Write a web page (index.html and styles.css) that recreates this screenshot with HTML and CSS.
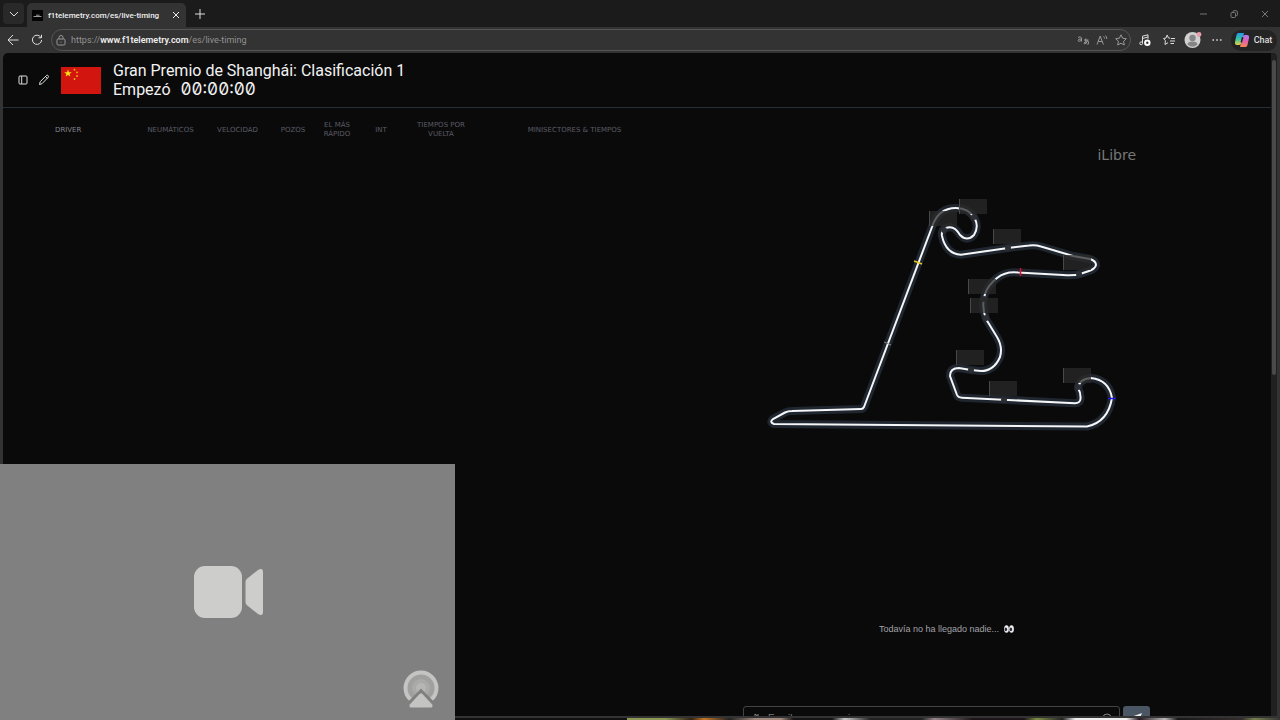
FILE: index.html
```html
<!DOCTYPE html>
<html lang="es">
<head>
  <meta charset="UTF-8" />
  <meta name="viewport" content="width=device-width, initial-scale=1.0"/>
  <title>f1telemetry.com/es/live-timing</title>
  <link rel="stylesheet" href="styles.css">
</head>
<body>

  <div class="browser">
    <div class="tab-strip">
      <button class="tab-menu" aria-label="Tabs"><svg width="10" height="10" viewBox="0 0 10 10"><path d="M1 3l4 4 4-4"/></svg></button>
      <div class="tab">
        <svg class="favicon" width="11" height="11" viewBox="0 0 11 11"><rect width="11" height="11" fill="#050505" stroke="none"/><path d="M1.500 6.500h8M4 5.200h3.500" stroke="#999"/></svg>
        <span>f1telemetry.com/es/live-timing</span>
        <button aria-label="Close tab"><svg width="8" height="8" viewBox="0 0 8 8"><path d="M1 1l6 6M7 1L1 7"/></svg></button>
      </div>
      <button class="new-tab" aria-label="New tab"><svg width="10" height="10" viewBox="0 0 10 10"><path d="M5 0v10M0 5h10"/></svg></button>
      <div class="window-buttons">
        <button aria-label="Minimize"><svg width="8" height="8" viewBox="0 0 8 8"><path d="M1 4h7"/></svg></button>
        <button aria-label="Restore"><svg width="8" height="8" viewBox="0 0 8 8"><rect x="1" y="2.500" width="4.500" height="5" rx="1"/><path d="M3 2.500V1.500q0-.8.8-.8h2.400q1.200 0 1.200 1.200v3q0 .8-.8.800h-1"/></svg></button>
        <button aria-label="Close"><svg width="8" height="8" viewBox="0 0 8 8"><path d="M1 1l6 6M7 1L1 7"/></svg></button>
      </div>
    </div>

    <div class="toolbar">
      <button aria-label="Back"><svg width="12" height="12" viewBox="0 0 12 12"><path d="M11.500 6H1M6 1L1 6l5 5"/></svg></button>
      <button aria-label="Reload"><svg width="12" height="12" viewBox="0 0 12 12"><path d="M9.800 3.200A4.600 4.600 0 1 0 10.600 6M10.500 .8v3h-3"/></svg></button>
      <div class="address">
        <svg width="10" height="11" viewBox="0 0 10 11"><rect x="1" y="4" width="8" height="6" rx="1.200"/><path d="M3 4V2.500a2 2 0 0 1 4 0V4M5 6.500v1"/></svg>
        <span class="url">https://<b>www.f1telemetry.com</b>/es/live-timing</span>
        <svg width="12" height="10" viewBox="0 0 12 10"><path d="M1 2.500q2.500-1.500 3.500.3V6.500M4.500 4Q1 3.800 1 5.500T4.500 5.500M7 5h4.500M8.800 3.500q-.4 3 .4 5M10.500 6Q9 9 7.400 8.800T8.500 6.500t3 .7-1.200 2"/></svg>
        <svg width="12" height="10" viewBox="0 0 12 10"><path d="M1 9.500L4.200 1l3.200 8.500M2.200 6.500h4M7.500 1.500q1 .8 1 2M9.300 .5q1.500 1.300 1.500 3.500"/></svg>
        <svg class="star" width="12" height="12" viewBox="0 0 12 12"><path d="M6 .8l1.600 3.400 3.700.5-2.700 2.600.7 3.700L6 9.200 2.700 11l.7-3.700L.7 4.700l3.700-.5z"/></svg>
      </div>
      <button aria-label="Media"><svg width="12" height="12" viewBox="0 0 12 12"><path d="M3.500 9V2.200L9 .8v4M3.500 4.500L9 3"/><circle cx="2.200" cy="9.300" r="1.400"/><circle cx="8.300" cy="8.700" r="2.200" stroke="#fff" stroke-width="2"/></svg></button>
      <button aria-label="Favorites"><svg width="12" height="12" viewBox="0 0 12 12"><path d="M7.200 4.200L5.400 3.900 4.200 1 3 4 .6 4.500 2.400 6.700 2 10.500l3-1.800M8 4.500h4M7 7h5M7.500 9.500H11"/></svg></button>
      <button class="profile" aria-label="Profile"><svg width="18" height="18" viewBox="0 0 18 18"><circle cx="8.500" cy="9" r="8" fill="#d0d0d0" stroke="none"/><circle cx="8.500" cy="7" r="3.200" fill="#858585" stroke="none"/><path d="M3.500 13.500q0-3 5-3t5 3q-5 4.500-10 0z" fill="#858585" stroke="none"/><circle cx="15" cy="3.500" r="2.400" fill="#e8a0ac" stroke="none"/></svg></button>
      <button aria-label="More"><svg width="10" height="4" viewBox="0 0 10 4"><path d="M.5 2h1.500M4.300 2h1.500M8 2h1.500" stroke-width="1.500"/></svg></button>
      <button class="chat-button">
        <svg width="16" height="16" viewBox="0 0 16 16">
          <defs>
            <linearGradient id="cool" x2="0" y2="1"><stop stop-color="#2498ee"/><stop offset=".5" stop-color="#36c1a2"/><stop offset="1" stop-color="#e6d63b"/></linearGradient>
            <linearGradient id="warm" x2="0" y2="1"><stop stop-color="#a97cf5"/><stop offset=".5" stop-color="#e45eb0"/><stop offset="1" stop-color="#f58a52"/></linearGradient>
          </defs>
          <path d="M4.500 1h5.500L7.500 11q-.5 2-2.500 2H3q-2.500 0-2-3L2.500 3q.5-2 2-2z" fill="url(#cool)" stroke="none"/>
          <path d="M11.500 15H6L8.500 5q.5-2 2.500-2h2q2.500 0 2 3L13.500 13q-.5 2-2 2z" fill="url(#warm)" stroke="none"/>
          <path d="M8.700 5L7.300 10.500" stroke="#222" stroke-width="1.500"/>
        </svg>
        Chat
      </button>
    </div>

    <div class="viewport">
      <div class="page">
        <header>
          <button aria-label="Panel"><svg width="10" height="10" viewBox="0 0 10 10"><rect x="1" y="1" width="8" height="8" rx="1"/><path d="M3.700 1v8"/></svg></button>
          <button aria-label="Editar"><svg width="12" height="12" viewBox="0 0 12 12"><path d="M1.500 10.500l.7-2.800L8.500 1.500q.8-.7 1.600.1t.1 1.700L4 9.700zM7.500 2.500l2 2"/></svg></button>
          <svg class="flag" width="40" height="27" viewBox="0 0 40 27">
            <rect width="40" height="27" fill="#d2160f"/>
            <path d="M7 2.500l1 2.700h2.800L8.600 6.900l.8 2.700L7 8 4.600 9.600l.8-2.700L3.200 5.200H6z" fill="#fbdc12"/>
            <g fill="#efb514"><circle cx="13.500" cy="2.700" r=".9"/><circle cx="16" cy="5.300" r=".9"/><circle cx="16" cy="9" r=".9"/><circle cx="13.500" cy="12" r=".9"/></g>
          </svg>
          <div class="session">
            <h1>Gran Premio de Shanghái: Clasificación 1</h1>
            <p>Empezó <time>00:00:00</time></p>
          </div>
        </header>

        <main>
          <table class="timing">
            <thead>
              <tr>
                <th class="driver">Driver</th>
                <th class="tyres">Neumáticos</th>
                <th class="tyres">Velocidad</th>
                <th class="pits">Pozos</th>
                <th class="pits">El más rápido</th>
                <th class="pits">Int</th>
                <th class="laps">Tiempos por vuelta</th>
                <th class="sectors">Minisectores &amp; tiempos</th>
              </tr>
            </thead>
          </table>

          <section class="side">
            <p class="track-status">iLibre</p>
            <svg class="track" width="370" height="250" viewBox="760 190 370 250">
              <defs>
                <path id="circuit" d="M864 407L932 227Q938 208 956 208Q969 208 975 219Q979 227 974 235Q967 242 960 235C956 228 951 226 946 228Q941 230 942 236Q946 254 961 254.700L1008 248L1029 245.500Q1035 244.500 1041 246.500L1073 256L1090 259Q1096 261 1096 265Q1095 269 1089 271L1080 274Q1074 276 1063 275L1018 272.500Q1006 271 997 278Q988 285 985 294Q981 306 986 319L997 337Q1003 347 1000 357Q994 371 981 371L971 370L959 368Q950 368 950 376L957 395Q958 397.500 962 397.700L1075 403.300Q1080 403 1080.500 399Q1081 393 1078 388Q1079 379 1091 378Q1109 380 1112 398Q1108 422 1087 426.500L774 424Q769 422 773 419L785 412.500Q788 411 792 411L861 409Q863 409 864 407Z"/>
              </defs>
              <use href="#circuit" class="track-edge"/>
              <use href="#circuit" class="track-line"/>
              <g class="corners">
                <circle cx="974" cy="217" r="3"/><circle cx="944" cy="230" r="3"/><circle cx="1008" cy="248" r="3"/>
                <circle cx="1079" cy="274" r="3"/><circle cx="984" cy="299" r="3"/><circle cx="986" cy="318" r="3"/>
                <circle cx="971" cy="370" r="3"/><circle cx="1004" cy="400" r="3"/><circle cx="1078" cy="387" r="3"/>
              </g>
              <g class="labels">
                <rect x="929" y="211" width="28" height="15"/><rect x="959" y="199" width="28" height="15"/>
                <rect x="993" y="229" width="28" height="15"/><rect x="1063" y="255" width="28" height="15"/>
                <rect x="968" y="279" width="28" height="15"/><rect x="970" y="298" width="28" height="15"/>
                <rect x="956" y="350" width="28" height="15"/><rect x="989" y="381" width="28" height="15"/>
                <rect x="1063" y="368" width="28" height="15"/>
              </g>
              <path class="label-bars" d="M929.500 211v15M959.500 199v15M993.500 229v15M1063.500 255v15M968.500 279v15M970.500 298v15M956.500 350v15M989.500 381v15M1063.500 368v15"/>
              <path d="M914 261l8 3" stroke="#e6c620" stroke-width="1.500"/>
              <path d="M884 342l7 3" stroke="#888"/>
              <path d="M1020.500 268v8" stroke="#e0102c" stroke-width="1.500"/>
              <path d="M1108 398.500h8" stroke="#1c16e0" stroke-width="1.500"/>
            </svg>
            <div class="chat-log">
              <p>Todavía no ha llegado nadie...
                <svg width="10" height="8" viewBox="0 0 10 8"><g fill="#eee" stroke="none"><ellipse cx="2.500" cy="4" rx="2.400" ry="3.800"/><ellipse cx="7.500" cy="4" rx="2.400" ry="3.800"/></g><g fill="#30283c" stroke="none"><ellipse cx="1.900" cy="4.300" rx="1.200" ry="1.900"/><ellipse cx="6.900" cy="4.300" rx="1.200" ry="1.900"/></g></svg>
              </p>
            </div>
            <form class="composer">
              <label class="message-box">
                <svg width="10" height="10" viewBox="0 0 10 10"><path d="M2 1v8M5 1v8M2 1l5 4"/></svg>
                <input type="text" placeholder="Escribe un mensaje..." aria-label="Mensaje">
                <svg width="10" height="10" viewBox="0 0 10 10"><circle cx="5" cy="5" r="4"/><path d="M3 6q2 2 4 0"/></svg>
              </label>
              <button type="button" aria-label="Enviar"><svg width="12" height="12" viewBox="0 0 12 12"><path d="M0 5L11 1 7 11 5 7z" fill="#eee" stroke="none"/></svg></button>
            </form>
          </section>
        </main>
      </div>
      <div class="scrollbar"><div class="thumb"></div></div>
    </div>
  </div>
  <div class="desktop"></div>

  <div class="camera">
    <svg width="70" height="52" viewBox="0 0 70 52"><rect width="48" height="52" rx="11" fill="#cdcdcb" stroke="none"/><path d="M51.500 16q0-2 1.500-3.200L64 4q5-2.500 5 2v40q0 4.500-5 2L53 39.200q-1.500-1.200-1.500-3.200z" fill="#cdcdcb" stroke="none"/></svg>
    <svg class="cast" width="36" height="38" viewBox="0 0 36 38">
      <circle cx="18" cy="18" r="15.500" fill="#a0a09e" stroke="#c4c4c2" stroke-width="4"/>
      <circle cx="18" cy="18" r="9" fill="#aaaaa8" stroke="none"/>
      <circle cx="18" cy="18" r="5" fill="#b6b6b4" stroke="none"/>
      <path d="M18 20L2 36.500V40h32v-3.500z" fill="#808080" stroke="#808080" stroke-width="2"/>
      <path d="M16.800 23.800q1.200-1.200 2.400 0L29.200 34.500q1 3-1.200 3H8q-2.200 0-1.200-3z" fill="#c4c4c2" stroke="none"/>
    </svg>
  </div>

</body>
</html>
```
FILE: styles.css
```css
* { margin: 0; padding: 0; box-sizing: border-box; }
body { height: 100vh; display: flex; flex-direction: column; overflow: hidden; background: #333; color: #ddd; font-family: Roboto, "Noto Sans", sans-serif; }
svg { display: block; flex: none; fill: none; stroke: currentColor; stroke-width: 1; }
button { display: flex; align-items: center; justify-content: center; flex: none; border: none; background: none; color: inherit; font: inherit; cursor: pointer; }

/* browser */
.browser { flex: 1; min-height: 0; display: flex; flex-direction: column; }
.tab-strip { height: 27px; flex: none; display: flex; align-items: center; background: #1b1b1b; padding-left: 3px; }
.tab-menu { width: 21px; height: 21px; margin-right: 3px; border-radius: 4px; background: #292929; }
.tab { width: 159px; height: 24px; align-self: flex-end; display: flex; align-items: center; gap: 5px; padding: 0 4px 0 5px; border-radius: 5px 5px 0 0; background: #333; color: #eee; font-size: 8px; font-weight: 500; }
.tab span { flex: 1; white-space: nowrap; }
.tab button { width: 12px; height: 12px; }
.new-tab { width: 20px; height: 20px; margin-left: 4px; }
.window-buttons { display: flex; margin-left: auto; color: #777; }
.window-buttons button { width: 31px; height: 27px; }
.toolbar { height: 26px; flex: none; display: flex; align-items: center; padding: 0 3px 0 1px; background: #333; }
.toolbar > button { width: 24px; height: 21px; }
.address { flex: 1; height: 22px; display: flex; align-items: center; gap: 7px; margin: 0 2px; padding: 0 3px 0 4px; border: 1px solid #555; border-radius: 11px; color: #999; }
.address .url { flex: 1; font-size: 9px; color: #929292; margin-left: -2px; }
.address b { color: #eee; font-weight: 600; }
.toolbar > .chat-button { width: 46px; gap: 4px; margin-left: 2px; padding-right: 2px; border-radius: 10px; background: #242424; font-size: 9px; font-weight: 500; }

/* page */
.viewport { flex: 1; min-height: 0; display: flex; margin: 0 3px 2px; border-radius: 5px 5px 0 0; overflow: hidden; background: #0a0a0a; }
.page { flex: 1; min-width: 0; font-family: "DejaVu Sans", sans-serif; }
.scrollbar { width: 6px; padding-top: 7px; background: #202020; }
.thumb { width: 4px; height: 48%; margin: 0 auto; border-radius: 2px; background: #4a4a4a; }
header { height: 55px; display: flex; align-items: center; gap: 10px; padding: 0 15px; border-bottom: 1px solid #263038; }
.flag { margin: 0 2px 0 1px; stroke: none; }
.session { color: #f2f2f2; font-family: Roboto, sans-serif; line-height: 18px; }
.session h1, .session p { font-size: 16px; font-weight: normal; }
.session time { margin-left: 6px; font-family: Inter, sans-serif; font-size: 17px; font-feature-settings: "zero", "tnum"; }
main { display: flex; align-items: flex-start; }
.timing { flex: none; width: 615px; margin: 12px 0 0 52px; border-collapse: collapse; table-layout: fixed; }
.timing th { height: 20px; font-size: 7px; line-height: 9px; font-weight: normal; text-transform: uppercase; color: #5c5c66; }
.timing .driver { width: 82px; text-align: left; color: #84848c; }
.tyres { width: 67px; }
.pits { width: 44px; }
.timing .laps { width: 76px; padding: 0 10px; }
.side { flex: 1; padding: 40px 121px 0 73px; }
.track-status { padding-right: 14px; font-size: 14px; line-height: 14px; text-align: right; color: #777; }
.track { margin: 28px 0 0 17px; }
.track-edge { stroke: #20262f; stroke-width: 8; }
.track-line { stroke: #f4f6f8; stroke-width: 2; }
.corners { fill: #2d2e33; stroke: none; }
.labels { fill: #292929; fill-opacity: .75; stroke: none; }
.label-bars { stroke: #484848; }
.chat-log { height: 266px; display: flex; flex-direction: column; justify-content: flex-end; align-items: center; padding-bottom: 70px; }
.chat-log p { display: flex; align-items: center; gap: 5px; color: #a2a2a8; font-family: "Liberation Sans", Arial, sans-serif; font-size: 9px; line-height: 14px; }
.composer { display: flex; gap: 3px; }
.message-box { flex: 1; height: 24px; display: flex; align-items: center; gap: 5px; padding: 0 7px 0 9px; border: 1px solid #444; border-radius: 3px; color: #888; }
.message-box input { flex: 1; min-width: 0; border: none; outline: none; background: none; color: #ddd; font: 10px "Liberation Sans", Arial, sans-serif; }
.message-box input::placeholder { color: #777; }
.composer button { width: 27px; height: 24px; border-radius: 3px; background: #4b5664; }

/* whatever is behind the browser window */
.desktop { height: 2px; flex: none; background: linear-gradient(90deg, #111 49%, #8c9a55 49%, #8c9a55 52%, #332211 54%, #c77828 55%, #222 57%, #a58c80 59%, #a58c80 61%, #141414 62%, #141414 65%, #ccc 66%, #222 68%, #222 72%, #97868b 73%, #1c1418 76%, #1c1418 80%, #809044 81%, #222 83%, #eee 84%, #eee 88%, #251820 89%, #bbb 91%, #181818 92%, #332c2c 97%, #78804c 98%, #333); }

/* floating webcam panel */
.camera { position: absolute; left: 0; bottom: 0; width: 455px; height: 256px; display: flex; align-items: center; justify-content: center; padding-left: 2px; background: #808080; }
.cast { position: absolute; right: 16px; bottom: 12px; }
```
